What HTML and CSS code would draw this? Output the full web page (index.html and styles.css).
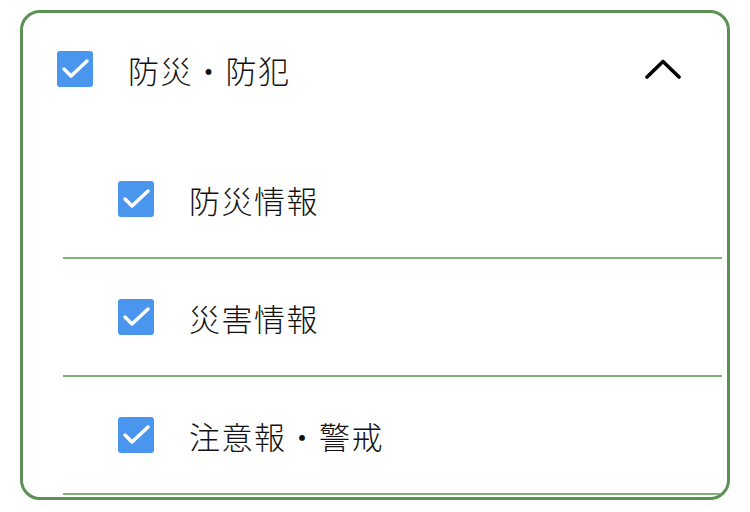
FILE: index.html
```html
<!DOCTYPE html>
<html lang="ja">
<head>
    <meta charset="UTF-8">
    <meta name="viewport" content="width=device-width, initial-scale=1.0">
    <title>防災・防犯</title>
    <link rel="stylesheet" href="styles.css">
</head>
<body>
    <div class="panel">
        <div class="panel-header">
            <svg class="check" width="36" height="36" viewBox="0 0 36 36">
                <rect width="36" height="36" rx="3" fill="#4a96ee"/>
                <polyline points="7,18 14,25 30,10" fill="none" stroke="#fff" stroke-width="3.5" stroke-linecap="round" stroke-linejoin="round"/>
            </svg>
            <span class="label">防災・防犯</span>
            <svg class="chevron" width="36" height="20" viewBox="0 0 36 20">
                <polyline points="2,18 18,2.5 34,18" fill="none" stroke="#000" stroke-width="3.6" stroke-linecap="round" stroke-linejoin="round"/>
            </svg>
        </div>

        <ul class="items">
            <li class="item">
                <svg class="check" width="36" height="36" viewBox="0 0 36 36">
                    <rect width="36" height="36" rx="3" fill="#4a96ee"/>
                    <polyline points="7,18 14,25 30,10" fill="none" stroke="#fff" stroke-width="3.5" stroke-linecap="round" stroke-linejoin="round"/>
                </svg>
                <span class="label">防災情報</span>
            </li>
            <li class="item">
                <svg class="check" width="36" height="36" viewBox="0 0 36 36">
                    <rect width="36" height="36" rx="3" fill="#4a96ee"/>
                    <polyline points="7,18 14,25 30,10" fill="none" stroke="#fff" stroke-width="3.5" stroke-linecap="round" stroke-linejoin="round"/>
                </svg>
                <span class="label">災害情報</span>
            </li>
            <li class="item">
                <svg class="check" width="36" height="36" viewBox="0 0 36 36">
                    <rect width="36" height="36" rx="3" fill="#4a96ee"/>
                    <polyline points="7,18 14,25 30,10" fill="none" stroke="#fff" stroke-width="3.5" stroke-linecap="round" stroke-linejoin="round"/>
                </svg>
                <span class="label">注意報・警戒</span>
            </li>
        </ul>
    </div>
</body>
</html>
```

FILE: styles.css
```css
/* Reset */
* {
    margin: 0;
    padding: 0;
    box-sizing: border-box;
}

body {
    background-color: #fff;
    font-family: "Noto Sans CJK JP", "Noto Sans", sans-serif;
    color: #111;
}

/* Outer card */
.panel {
    margin: 10px 20px 0;
    height: 490px;
    border: 3px solid #5b9153;
    border-radius: 20px;
    overflow: hidden;
}

/* Header row with the group checkbox */
.panel-header {
    display: flex;
    align-items: center;
    height: 112px;
    padding: 0 46px 0 34px;
}

.label {
    font-size: 31px;
    font-weight: 300;
    letter-spacing: 1.5px;
    line-height: 1;
    margin-left: 35px;
}

.chevron {
    margin-left: auto;
}

.check {
    flex-shrink: 0;
    display: block;
}

/* Sub items */
.items {
    list-style: none;
    margin: 16px 5px 0 40px;
}

.item {
    display: flex;
    align-items: center;
    height: 118px;
    padding-left: 55px;
    border-bottom: 2px solid #80b078;
}
```
